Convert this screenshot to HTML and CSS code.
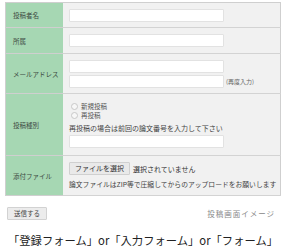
FILE: index.html
```html
<!DOCTYPE html>
<html lang="ja">
<head>
<meta charset="utf-8">
<link rel="stylesheet" href="styles.css">
</head>
<body>
<table class="form-table">
  <tr class="r1">
    <th>投稿者名</th>
    <td><span class="input"></span></td>
  </tr>
  <tr class="r2">
    <th>所属</th>
    <td><span class="input"></span></td>
  </tr>
  <tr class="r3">
    <th>メールアドレス</th>
    <td>
      <div class="stack">
        <span class="input"></span>
        <div class="line"><span class="input"></span><span class="note">(再度入力)</span></div>
      </div>
    </td>
  </tr>
  <tr class="r4">
    <th>投稿種別</th>
    <td>
      <div class="radio"><span class="dot"></span>新規投稿</div>
      <div class="radio"><span class="dot"></span>再投稿</div>
      <div class="hint">再投稿の場合は前回の論文番号を入力して下さい</div>
      <span class="input"></span>
    </td>
  </tr>
  <tr class="r5">
    <th>添付ファイル</th>
    <td>
      <div class="file"><span class="file-btn">ファイルを選択</span><span class="file-none">選択されていません</span></div>
      <div class="hint2">論文ファイルはZIP等で圧縮してからのアップロードをお願いします</div>
    </td>
  </tr>
</table>
<div class="actions">
  <span class="submit">送信する</span>
  <span class="img-cap">投稿画面イメージ</span>
</div>
<p class="caption">「登録フォーム」or「入力フォーム」or「フォーム」</p>
</body>
</html>
```
FILE: styles.css
```css
html, body {
  margin: 0;
  padding: 0;
  background: #fff;
}
body {
  font-family: "Noto Sans CJK JP", "Noto Sans", sans-serif;
  color: #333;
}
.form-table {
  margin: 2px 0 0 5px;
  width: 276px;
  border-collapse: collapse;
  table-layout: fixed;
  border: 1px solid #cfcfcf;
}
.form-table th {
  width: 50px;
  background: #a6d7b3;
  text-align: left;
  font-weight: normal;
  font-size: 6.5px;
  color: #3d4a42;
  padding: 0 0 0 7px;
  border-bottom: 1px solid #cfcfcf;
  vertical-align: middle;
}
.form-table td {
  background: #f1f1f1;
  padding: 0 0 0 6px;
  border-bottom: 1px solid #d3d3d3;
  vertical-align: middle;
  font-size: 7px;
  color: #444;
}
.r1 { height: 25px; }
.r2 { height: 26px; }
.r3 { height: 40px; }
.r4 { height: 62px; }
.r5 { height: 40px; }
.input {
  display: block;
  width: 153px;
  height: 11px;
  background: #fff;
  border: 1px solid #e2e2e2;
  border-radius: 1px;
}
.stack {
  display: flex;
  flex-direction: column;
  gap: 2px;
}
.line {
  display: flex;
  align-items: center;
  gap: 2px;
}
.note {
  font-size: 6px;
  color: #666;
}
.r4 td {
  vertical-align: top;
  padding-top: 8px;
}
.radio {
  display: flex;
  align-items: center;
  gap: 3px;
  height: 9px;
  margin-left: 2px;
  font-size: 6.5px;
  color: #555;
  line-height: 9px;
}
.dot {
  width: 5px;
  height: 5px;
  border-radius: 50%;
  border: 1px solid #c8c8c8;
  background: #f7f7f7;
}
.hint {
  margin-top: 3px;
  font-size: 7px;
  line-height: 10px;
  color: #444;
  white-space: nowrap;
}
.r4 .input {
  margin-top: 2px;
}
.file {
  display: flex;
  align-items: center;
  gap: 3px;
  font-size: 7px;
}
.file-btn {
  display: inline-block;
  height: 11px;
  line-height: 11px;
  padding: 0 5px;
  background: #e9e9e9;
  border: 1px solid #d0d0d0;
  border-radius: 1px;
  color: #333;
}
.file-none {
  color: #333;
}
.hint2 {
  margin-top: 5px;
  font-size: 6.8px;
  line-height: 9px;
  color: #444;
  white-space: nowrap;
}
.actions {
  display: flex;
  justify-content: space-between;
  align-items: center;
  margin: 11px 13px 0 7px;
}
.submit {
  display: inline-block;
  height: 11px;
  line-height: 11px;
  padding: 0 6px;
  font-size: 6.5px;
  color: #444;
  background: #ececec;
  border: 1px solid #d2d2d2;
  border-radius: 1px;
}
.img-cap {
  font-family: "Noto Sans CJK JP", serif;
  font-size: 7.5px;
  letter-spacing: 1px;
  color: #888;
}
.caption {
  margin: 13px 0 0 8px;
  font-size: 11.3px;
  line-height: 14px;
  color: #222;
  white-space: nowrap;
}
```
